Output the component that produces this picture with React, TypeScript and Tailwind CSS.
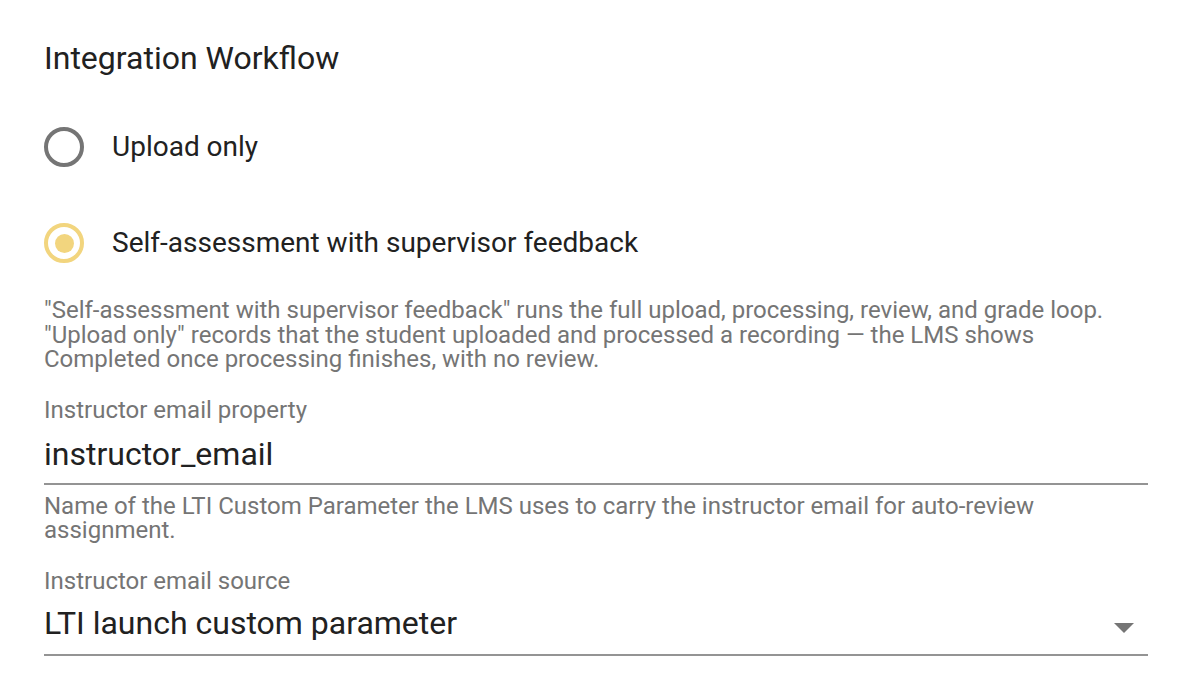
import { useState } from 'react'

const font = { fontFamily: 'Roboto, "Liberation Sans", sans-serif' }

function Radio({ checked, label, onClick }: { checked: boolean; label: string; onClick: () => void }) {
  return (
    <button type="button" onClick={onClick} className="flex h-[96px] items-center text-left">
      <span
        className={
          checked
            ? 'flex size-[40px] shrink-0 items-center justify-center rounded-full border-4 border-[#f2d57e]'
            : 'flex size-[40px] shrink-0 items-center justify-center rounded-full border-4 border-[#757575]'
        }
      >
        {checked && <span className="size-[19px] rounded-full bg-[#f2d57e]" />}
      </span>
      <span className="ml-[28px] text-[28px] leading-[34px] text-[#212121]">{label}</span>
    </button>
  )
}

export default function App() {
  const [mode, setMode] = useState('self')

  return (
    <div style={font} className="min-h-screen bg-white px-[44px] pt-[39px]">
      <div className="w-[1104px]">
        <h2 className="text-[32px] leading-[38px] text-[#212121]">Integration Workflow</h2>

        <div className="mt-[22px] flex flex-col">
          <Radio checked={mode === 'upload'} label="Upload only" onClick={() => setMode('upload')} />
          <Radio
            checked={mode === 'self'}
            label="Self-assessment with supervisor feedback"
            onClick={() => setMode('self')}
          />
        </div>

        <p className="mt-[7px] text-[24px] leading-[24.5px] text-[#757575]">
          "Self-assessment with supervisor feedback" runs the full upload, processing, review, and grade loop.
          <br />
          "Upload only" records that the student uploaded and processed a recording — the LMS shows Completed once
          processing finishes, with no review.
        </p>

        <div className="mt-[26.5px]">
          <label className="block text-[24px] leading-[24.5px] text-[#757575]">Instructor email property</label>
          <div className="mt-[12px] border-b-2 border-[#949494] pb-[10px]">
            <input
              defaultValue="instructor_email"
              className="block w-full bg-transparent text-[32px] leading-[38px] text-[#212121] outline-none"
              style={font}
            />
          </div>
          <p className="mt-[9px] text-[24px] leading-[24.5px] text-[#757575]">
            Name of the LTI Custom Parameter the LMS uses to carry the instructor email for auto-review assignment.
          </p>
        </div>

        <div className="mt-[26px]">
          <label className="block text-[24px] leading-[24.5px] text-[#757575]">Instructor email source</label>
          <div className="mt-[11px] flex items-center justify-between border-b-2 border-[#949494] pb-[12px]">
            <span className="text-[32px] leading-[38px] text-[#212121]">LTI launch custom parameter</span>
            <svg width="20" height="10" viewBox="0 0 20 10" className="mr-[14px] mt-[10px]">
              <path d="M0 0 L20 0 L10 10 Z" fill="#757575" />
            </svg>
          </div>
        </div>
      </div>
    </div>
  )
}
